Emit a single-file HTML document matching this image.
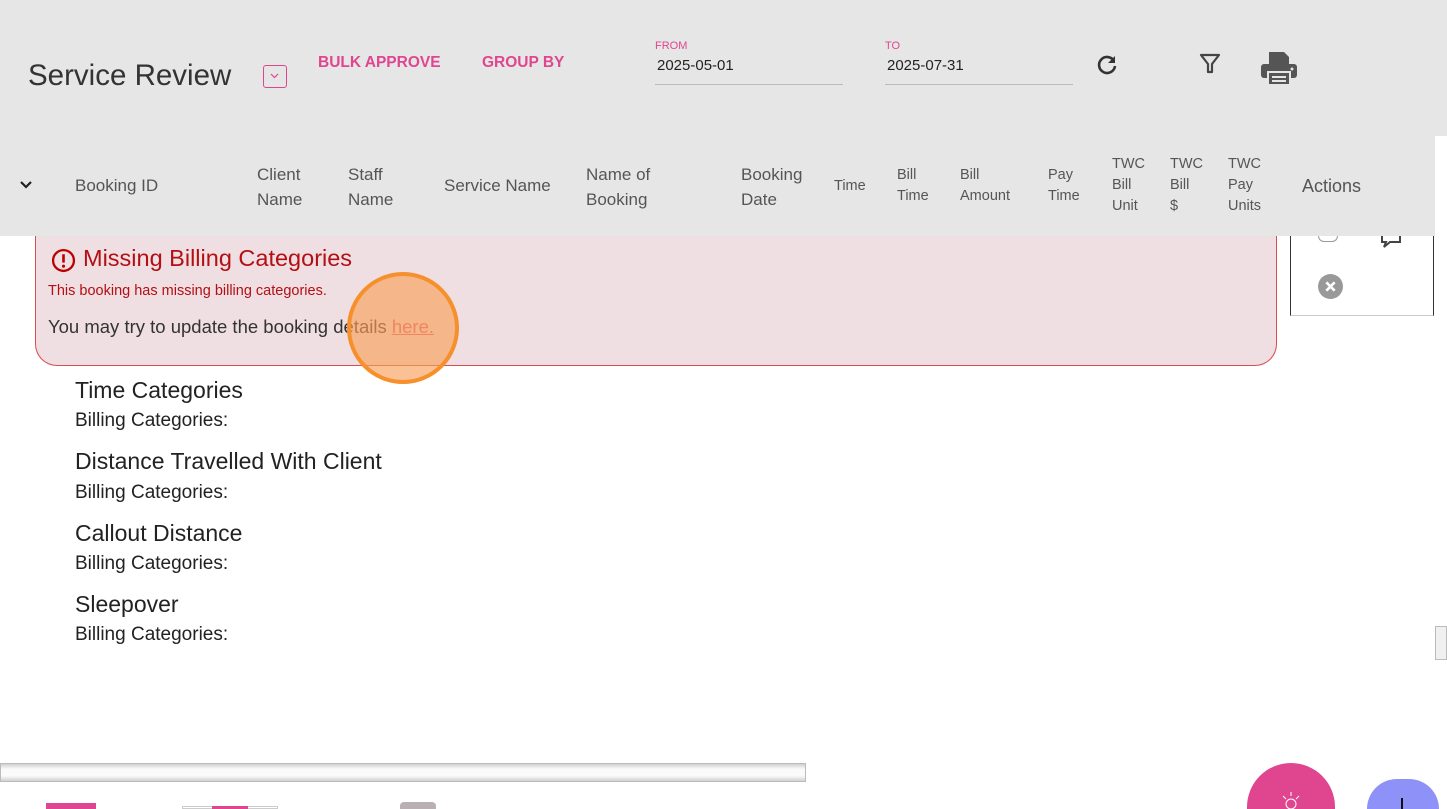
<!DOCTYPE html>
<html><head><style>
*{margin:0;padding:0;box-sizing:border-box}
html,body{width:1447px;height:809px;overflow:hidden}
body{background:#fff;font-family:"Liberation Sans",sans-serif;color:#333}
#w{position:relative;width:1447px;height:809px;overflow:hidden}
.a{position:absolute}
.top{left:0;top:0;width:1447px;height:136px;background:#e6e6e6}
.hdr{left:0;top:136px;width:1435px;height:100px;background:#e6e6e6}
.th{position:absolute;color:#555;font-size:17px;line-height:22px}
.sm{font-size:14.5px;line-height:21px}
.pink{color:#e0458f;font-weight:bold;font-size:15.5px}
.lbl{font-size:11px;color:#e0458f}
.inp{font-size:15px;color:#222;border-bottom:1px solid #bbb;width:188px;height:23px}
.cat{font-size:23px;color:#222}
.bc{font-size:19px;color:#222}
</style></head><body><div id="w">
<div class="a top"></div>
<div class="a" style="left:28px;top:59px;font-size:29.5px;color:#333">Service Review</div>
<div class="a" style="left:263px;top:65px;width:24px;height:23px;border:1.5px solid #e0458f;border-radius:3px"><svg width="21" height="20" viewBox="0 0 21 20"><path d="M7 8l3.5 3.5L14 8" stroke="#e0458f" fill="none" stroke-width="1.2"/></svg></div>
<div class="a pink" style="left:318px;top:54px">BULK APPROVE</div>
<div class="a pink" style="left:482px;top:54px">GROUP BY</div>
<div class="a lbl" style="left:655px;top:40px">FROM</div>
<div class="a inp" style="left:655px;top:57px;padding-left:2px;height:28px">2025-05-01</div>
<div class="a lbl" style="left:885px;top:40px">TO</div>
<div class="a inp" style="left:885px;top:57px;padding-left:2px;height:28px">2025-07-31</div>
<svg class="a" style="left:1095px;top:53px" width="24" height="24" viewBox="0 0 24 24"><path d="M19 8A8 8 0 1 0 20 13" stroke="#333" stroke-width="2.6" fill="none"/><path d="M20 3v7h-7z" fill="#333"/></svg>
<svg class="a" style="left:1198px;top:52px" width="24" height="24" viewBox="0 0 24 24"><path d="M3 3h18l-7 9v8h-4v-8z" stroke="#444" stroke-width="2.2" fill="none" stroke-linejoin="round"/></svg>
<svg class="a" style="left:1260px;top:50px" width="38" height="36" viewBox="0 0 38 36"><path d="M9 2h15l5 5v8H9z" fill="#555"/><rect x="1" y="14" width="36" height="14" rx="3" fill="#555"/><rect x="8" y="22" width="22" height="13" fill="#555" stroke="#e6e6e6" stroke-width="2"/><rect x="12" y="26" width="14" height="2" fill="#e6e6e6"/><rect x="12" y="30" width="14" height="2" fill="#e6e6e6"/><circle cx="32" cy="19" r="1.5" fill="#e6e6e6"/></svg>

<div class="a hdr"></div>
<svg class="a" style="left:19px;top:179px" width="14" height="12" viewBox="0 0 14 12"><path d="M2 3l5 5 5-5" stroke="#222" stroke-width="2.2" fill="none"/></svg>
<div class="th" style="left:75px;top:175px">Booking ID</div>
<div class="th" style="left:257px;top:162px;line-height:25px">Client<br>Name</div>
<div class="th" style="left:348px;top:162px;line-height:25px">Staff<br>Name</div>
<div class="th" style="left:444px;top:175px">Service Name</div>
<div class="th" style="left:586px;top:162px;line-height:25px">Name of<br>Booking</div>
<div class="th" style="left:741px;top:162px;line-height:25px">Booking<br>Date</div>
<div class="th sm" style="left:834px;top:176px">Time</div>
<div class="th sm" style="left:897px;top:165px">Bill<br>Time</div>
<div class="th sm" style="left:960px;top:165px">Bill<br>Amount</div>
<div class="th sm" style="left:1048px;top:165px">Pay<br>Time</div>
<div class="th sm" style="left:1112px;top:154px">TWC<br>Bill<br>Unit</div>
<div class="th sm" style="left:1170px;top:154px">TWC<br>Bill<br>$</div>
<div class="th sm" style="left:1228px;top:154px">TWC<br>Pay<br>Units</div>
<div class="th" style="left:1302px;top:175px;font-size:18px">Actions</div>

<div class="a" style="left:1290px;top:236px;width:144px;height:80px;border-left:1px solid #333;border-right:1px solid #333;border-bottom:1px solid #ccc;background:#fff"></div>
<div class="a" style="left:1318px;top:236px;width:20px;height:6px;border:1.5px solid #999;border-top:none;border-radius:0 0 10px 10px"></div>
<svg class="a" style="left:1380px;top:236px" width="28" height="12" viewBox="0 0 28 12"><path d="M2 0v6h4l-2 5 6-5h10V0" stroke="#444" stroke-width="2" fill="none"/></svg>
<svg class="a" style="left:1318px;top:274px" width="25" height="25" viewBox="0 0 24 24"><circle cx="12" cy="12" r="12" fill="#999"/><path d="M8 8l8 8M16 8l-8 8" stroke="#fff" stroke-width="2.5"/></svg>

<div class="a" style="left:35px;top:236px;width:1242px;height:130px;background:#efdfe2;border:1px solid #d94c4c;border-top:none;border-radius:0 0 22px 22px"></div>
<svg class="a" style="left:51px;top:248px" width="25" height="25" viewBox="0 0 24 24"><circle cx="12" cy="12" r="10" stroke="#b00" stroke-width="2.2" fill="none"/><path d="M12 6v8" stroke="#b00" stroke-width="2.5"/><circle cx="12" cy="17.5" r="1.5" fill="#b00"/></svg>
<div class="a" style="left:83px;top:245px;font-size:23.5px;color:#b30f14">Missing Billing Categories</div>
<div class="a" style="left:48px;top:283px;font-size:14.5px;color:#b30f14">This booking has missing billing categories.</div>
<div class="a" style="left:48px;top:316px;font-size:18.5px;color:#333">You may try to update the booking details <span style="color:#e2566a;text-decoration:underline">here.</span></div>
<div class="a" style="left:347px;top:272px;width:112px;height:112px;border-radius:50%;background:rgba(247,160,90,0.65);border:4px solid #f5902c"></div>

<div class="a cat" style="left:75px;top:377px">Time Categories</div>
<div class="a bc" style="left:75px;top:410px">Billing Categories:</div>
<div class="a cat" style="left:75px;top:448px">Distance Travelled With Client</div>
<div class="a bc" style="left:75px;top:482px">Billing Categories:</div>
<div class="a cat" style="left:75px;top:520px">Callout Distance</div>
<div class="a bc" style="left:75px;top:553px">Billing Categories:</div>
<div class="a cat" style="left:75px;top:591px">Sleepover</div>
<div class="a bc" style="left:75px;top:624px">Billing Categories:</div>

<div class="a" style="left:1435px;top:626px;width:12px;height:34px;background:#f0f0f0;border:1px solid #bbb"></div>
<div class="a" style="left:0;top:763px;width:806px;height:19px;background:linear-gradient(#d0d0d0,#fafafa 30%,#fafafa 70%,#d0d0d0);border:1px solid #bbb"></div>
<div class="a" style="left:46px;top:803px;width:50px;height:6px;background:#e0458f"></div>
<div class="a" style="left:182px;top:806px;width:96px;height:3px;border:1px solid #ccc"></div>
<div class="a" style="left:212px;top:806px;width:36px;height:3px;background:#e0458f"></div>
<div class="a" style="left:400px;top:802px;width:36px;height:7px;background:#b9b0b3;border-radius:4px 4px 0 0"></div>
<div class="a" style="left:1247px;top:763px;width:88px;height:46px;border-radius:44px 44px 0 0/44px 44px 0 0;background:#e0458f"></div>
<svg class="a" style="left:1276px;top:790px" width="30" height="19" viewBox="0 0 30 19"><circle cx="15" cy="14" r="5" stroke="#fff" fill="none"/><path d="M15 2v4M7 6l3 3M23 6l-3 3" stroke="#fff"/></svg>
<div class="a" style="left:1367px;top:779px;width:72px;height:30px;border-radius:36px 36px 0 0/36px 36px 0 0;background:#8e92f8"></div>
<div class="a" style="left:1401px;top:798px;width:2px;height:11px;background:#111"></div>
</div></body></html>
